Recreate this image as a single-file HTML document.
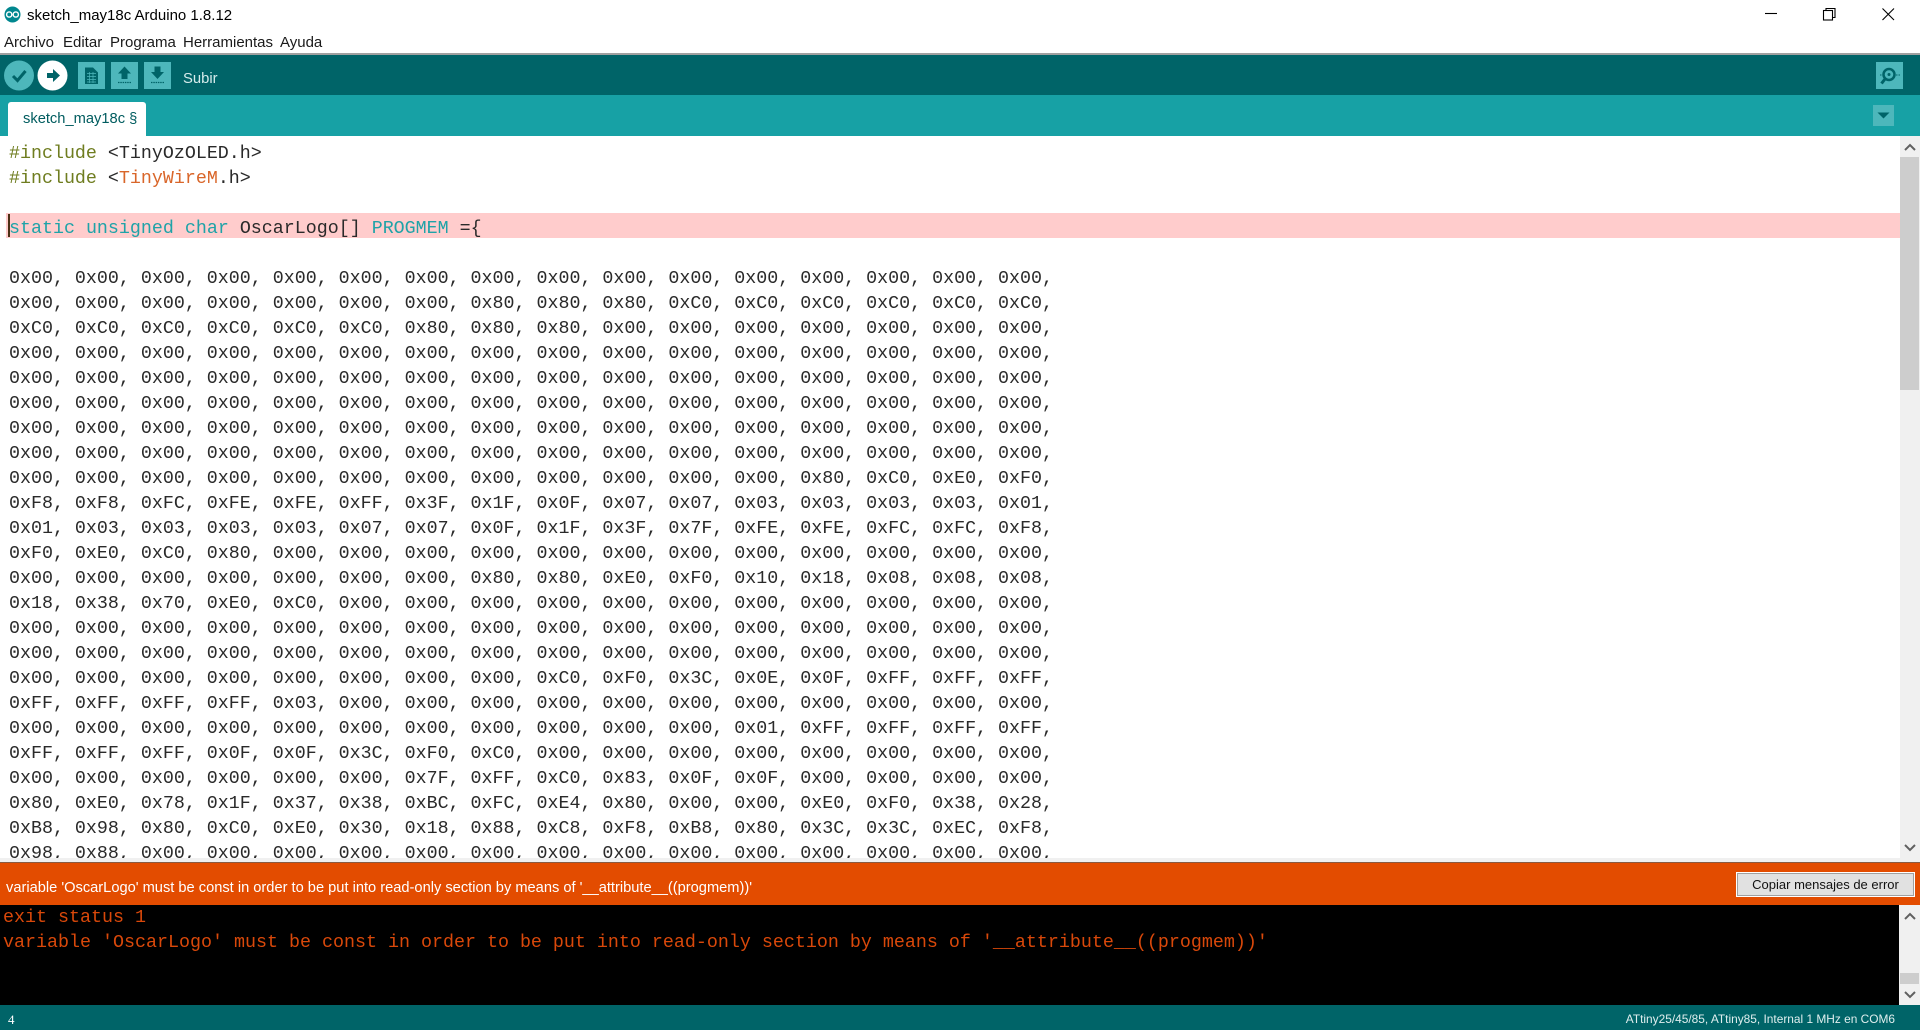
<!DOCTYPE html>
<html><head><meta charset="utf-8"><title>sketch_may18c Arduino 1.8.12</title>
<style>
html,body{margin:0;padding:0;background:#fff;}
body{width:1920px;height:1030px;position:relative;overflow:hidden;font-family:"Liberation Sans",sans-serif;}
.a{position:absolute;white-space:pre;}
.code{font-family:"Liberation Mono",monospace;font-size:18.32px;line-height:25px;color:#2a2a2a;}
.kw{color:#1fa3a8}.pp{color:#6f7d20}.lb{color:#D9662A}
</style></head><body>
<svg class="a" style="left:4px;top:6px" width="17" height="17" viewBox="0 0 17 17"><circle cx="8.5" cy="8.5" r="8" fill="#00878F"/><circle cx="5.2" cy="8.5" r="2.6" fill="none" stroke="#fff" stroke-width="1.4"/><circle cx="11.8" cy="8.5" r="2.6" fill="none" stroke="#fff" stroke-width="1.4"/></svg>
<div class="a" style="left:27px;top:6.500px;font-size:15px;line-height:18px;color:#000">sketch_may18c Arduino 1.8.12</div>
<div class="a" style="left:4px;top:34px;font-size:15px;line-height:18px;color:#1a1a1a">Archivo</div>
<div class="a" style="left:63px;top:34px;font-size:15px;line-height:18px;color:#1a1a1a">Editar</div>
<div class="a" style="left:110px;top:34px;font-size:15px;line-height:18px;color:#1a1a1a">Programa</div>
<div class="a" style="left:183px;top:34px;font-size:15px;line-height:18px;color:#1a1a1a">Herramientas</div>
<div class="a" style="left:280px;top:34px;font-size:15px;line-height:18px;color:#1a1a1a">Ayuda</div>
<svg class="a" style="left:1760px;top:4px" width="150" height="24" viewBox="0 0 150 24" fill="none" stroke="#000" stroke-width="1.1"><path d="M5 9.5H17"/><rect x="63.5" y="6.5" width="9" height="9.5" fill="#fff"/><path d="M66 6.5V4.5H75V13.5H72.5"/><path d="M122.5 4.5L134 16M134 4.5L122.5 16"/></svg>
<div class="a" style="left:0;top:53px;width:1920px;height:2px;background:#a0a0a0"></div>
<div class="a" style="left:0;top:55px;width:1920px;height:40px;background:#006468"></div>
<div class="a" style="left:0;top:95px;width:1920px;height:41px;background:#17A1A5"></div>
<svg class="a" style="left:0;top:55px" width="180" height="40" viewBox="0 0 180 40"><circle cx="19" cy="20.500" r="15" fill="#4DB7BB"/><path d="M13 21L17.5 25.500L25.5 16" fill="none" stroke="#006468" stroke-width="3"/><circle cx="52.5" cy="20.500" r="15" fill="#fff"/><path d="M47 18H53V14L60 20.500L53 27V23H47Z" fill="#006468"/>
<rect x="78" y="7" width="27" height="27" fill="#4DB7BB"/><path d="M85 12.5H93L98 17.500V29H85Z" fill="#006468"/><path d="M87 18.500H96M87 21.500H96M87 24.500H96M87 27H96M89.500 17V28M93 17V28" stroke="#4DB7BB" stroke-width=".7"/>
<rect x="111" y="7" width="27" height="27" fill="#4DB7BB"/><path d="M124.500 11.500L131 18.500H127.500V24H121.500V18.500H118Z" fill="#006468"/><path d="M118 27.500H131" stroke="#006468" stroke-width="1.200" stroke-dasharray="1.500 .8"/>
<rect x="144" y="7" width="27" height="27" fill="#4DB7BB"/><path d="M154.500 11.500H160.500V17H164L157.500 24L151 17H154.500Z" fill="#006468"/><path d="M151 27.500H164" stroke="#006468" stroke-width="1.200" stroke-dasharray="1.500 .8"/></svg>
<div class="a" style="left:183px;top:69.500px;font-size:14.800px;line-height:18px;color:#d6ecec">Subir</div>
<svg class="a" style="left:1876px;top:62px" width="27" height="27" viewBox="0 0 27 27"><rect width="27" height="27" fill="#4DB7BB"/><circle cx="13" cy="12.500" r="5.500" fill="none" stroke="#006468" stroke-width="2.500"/><circle cx="13" cy="12.500" r="1.500" fill="#006468"/><path d="M9 17L5.500 21.500" stroke="#006468" stroke-width="3"/><path d="M4 13H7M20 13H24" stroke="#006468" stroke-dasharray="1.500 1"/></svg>
<div class="a" style="left:8px;top:102px;width:138px;height:34px;background:#fff;border-radius:3px 3px 0 0"></div>
<div class="a" style="left:23px;top:110px;font-size:14.700px;line-height:18px;color:#005C5F">sketch_may18c §</div>
<svg class="a" style="left:1873px;top:105px" width="21" height="21" viewBox="0 0 21 21"><rect width="21" height="21" fill="#4DB7BB"/><path d="M4.500 7.500H16.500L10.500 13.500Z" fill="#006468"/></svg>
<div class="a" style="left:6px;top:213px;width:1894px;height:25px;background:#FFCCCC"></div>
<div class="a" style="left:8px;top:214px;width:2px;height:23px;background:#4a3015"></div>
<div class="a code" style="left:0;top:0;width:1900px;height:858px;overflow:hidden"><div class="a" style="left:9px;top:141px"><span class="pp">#include</span> &lt;TinyOzOLED.h&gt;
<span class="pp">#include</span> &lt;<span class="lb">TinyWireM</span>.h&gt;

<span class="kw">static</span> <span class="kw">unsigned</span> <span class="kw">char</span> OscarLogo[] <span class="kw">PROGMEM</span> ={

0x00, 0x00, 0x00, 0x00, 0x00, 0x00, 0x00, 0x00, 0x00, 0x00, 0x00, 0x00, 0x00, 0x00, 0x00, 0x00,
0x00, 0x00, 0x00, 0x00, 0x00, 0x00, 0x00, 0x80, 0x80, 0x80, 0xC0, 0xC0, 0xC0, 0xC0, 0xC0, 0xC0,
0xC0, 0xC0, 0xC0, 0xC0, 0xC0, 0xC0, 0x80, 0x80, 0x80, 0x00, 0x00, 0x00, 0x00, 0x00, 0x00, 0x00,
0x00, 0x00, 0x00, 0x00, 0x00, 0x00, 0x00, 0x00, 0x00, 0x00, 0x00, 0x00, 0x00, 0x00, 0x00, 0x00,
0x00, 0x00, 0x00, 0x00, 0x00, 0x00, 0x00, 0x00, 0x00, 0x00, 0x00, 0x00, 0x00, 0x00, 0x00, 0x00,
0x00, 0x00, 0x00, 0x00, 0x00, 0x00, 0x00, 0x00, 0x00, 0x00, 0x00, 0x00, 0x00, 0x00, 0x00, 0x00,
0x00, 0x00, 0x00, 0x00, 0x00, 0x00, 0x00, 0x00, 0x00, 0x00, 0x00, 0x00, 0x00, 0x00, 0x00, 0x00,
0x00, 0x00, 0x00, 0x00, 0x00, 0x00, 0x00, 0x00, 0x00, 0x00, 0x00, 0x00, 0x00, 0x00, 0x00, 0x00,
0x00, 0x00, 0x00, 0x00, 0x00, 0x00, 0x00, 0x00, 0x00, 0x00, 0x00, 0x00, 0x80, 0xC0, 0xE0, 0xF0,
0xF8, 0xF8, 0xFC, 0xFE, 0xFE, 0xFF, 0x3F, 0x1F, 0x0F, 0x07, 0x07, 0x03, 0x03, 0x03, 0x03, 0x01,
0x01, 0x03, 0x03, 0x03, 0x03, 0x07, 0x07, 0x0F, 0x1F, 0x3F, 0x7F, 0xFE, 0xFE, 0xFC, 0xFC, 0xF8,
0xF0, 0xE0, 0xC0, 0x80, 0x00, 0x00, 0x00, 0x00, 0x00, 0x00, 0x00, 0x00, 0x00, 0x00, 0x00, 0x00,
0x00, 0x00, 0x00, 0x00, 0x00, 0x00, 0x00, 0x80, 0x80, 0xE0, 0xF0, 0x10, 0x18, 0x08, 0x08, 0x08,
0x18, 0x38, 0x70, 0xE0, 0xC0, 0x00, 0x00, 0x00, 0x00, 0x00, 0x00, 0x00, 0x00, 0x00, 0x00, 0x00,
0x00, 0x00, 0x00, 0x00, 0x00, 0x00, 0x00, 0x00, 0x00, 0x00, 0x00, 0x00, 0x00, 0x00, 0x00, 0x00,
0x00, 0x00, 0x00, 0x00, 0x00, 0x00, 0x00, 0x00, 0x00, 0x00, 0x00, 0x00, 0x00, 0x00, 0x00, 0x00,
0x00, 0x00, 0x00, 0x00, 0x00, 0x00, 0x00, 0x00, 0xC0, 0xF0, 0x3C, 0x0E, 0x0F, 0xFF, 0xFF, 0xFF,
0xFF, 0xFF, 0xFF, 0xFF, 0x03, 0x00, 0x00, 0x00, 0x00, 0x00, 0x00, 0x00, 0x00, 0x00, 0x00, 0x00,
0x00, 0x00, 0x00, 0x00, 0x00, 0x00, 0x00, 0x00, 0x00, 0x00, 0x00, 0x01, 0xFF, 0xFF, 0xFF, 0xFF,
0xFF, 0xFF, 0xFF, 0x0F, 0x0F, 0x3C, 0xF0, 0xC0, 0x00, 0x00, 0x00, 0x00, 0x00, 0x00, 0x00, 0x00,
0x00, 0x00, 0x00, 0x00, 0x00, 0x00, 0x7F, 0xFF, 0xC0, 0x83, 0x0F, 0x0F, 0x00, 0x00, 0x00, 0x00,
0x80, 0xE0, 0x78, 0x1F, 0x37, 0x38, 0xBC, 0xFC, 0xE4, 0x80, 0x00, 0x00, 0xE0, 0xF0, 0x38, 0x28,
0xB8, 0x98, 0x80, 0xC0, 0xE0, 0x30, 0x18, 0x88, 0xC8, 0xF8, 0xB8, 0x80, 0x3C, 0x3C, 0xEC, 0xF8,
0x98, 0x88, 0x00, 0x00, 0x00, 0x00, 0x00, 0x00, 0x00, 0x00, 0x00, 0x00, 0x00, 0x00, 0x00, 0x00,</div></div>
<div class="a" style="left:1900px;top:136px;width:20px;height:724px;background:#f0f0f0"></div>
<div class="a" style="left:1900px;top:157px;width:19px;height:233px;background:#cdcdcd"></div>
<svg class="a" style="left:1900px;top:136px" width="20" height="724" fill="none" stroke="#606060" stroke-width="2"><path d="M5 14L10 9L15 14"/><path d="M5 709L10 714L15 709"/></svg>
<div class="a" style="left:0;top:858px;width:1920px;height:4px;background:#f0f0f0"></div>
<div class="a" style="left:0;top:862px;width:1920px;height:1px;background:#8a5a40"></div>
<div class="a" style="left:0;top:863px;width:1920px;height:42px;background:#E34C00"></div>
<div class="a" style="left:6px;top:879px;font-size:14.650px;line-height:18px;color:#fff">variable 'OscarLogo' must be const in order to be put into read-only section by means of '__attribute__((progmem))'</div>
<div class="a" style="left:1737px;top:873px;width:175px;height:21px;background:#e1e1e1;border:1px solid #a0a0a0;box-shadow:0 0 0 1px #fff;text-align:center;font-size:13px;line-height:21px;color:#111">Copiar mensajes de error</div>
<div class="a" style="left:0;top:905px;width:1899px;height:100px;background:#000"></div>
<div class="a code" style="left:3px;top:905px;font-size:18.34px;color:#d9480a">exit status 1
variable 'OscarLogo' must be const in order to be put into read-only section by means of '__attribute__((progmem))'</div>
<div class="a" style="left:1899px;top:905px;width:21px;height:100px;background:#f0f0f0"></div>
<div class="a" style="left:1900px;top:973px;width:19px;height:11px;background:#cdcdcd"></div>
<svg class="a" style="left:1900px;top:905px" width="20" height="100" fill="none" stroke="#606060" stroke-width="2"><path d="M5 14L10 9L15 14"/><path d="M5 87L10 92L15 87"/></svg>
<div class="a" style="left:0;top:1005px;width:1920px;height:25px;background:#006468"></div>
<div class="a" style="left:8px;top:1012px;font-family:'Liberation Serif',serif;font-size:13px;line-height:15px;color:#fff">4</div>
<div class="a" style="right:25px;top:1012px;font-size:11.900px;line-height:15px;color:#dfeeee">ATtiny25/45/85, ATtiny85, Internal 1 MHz en COM6</div>
</body></html>
